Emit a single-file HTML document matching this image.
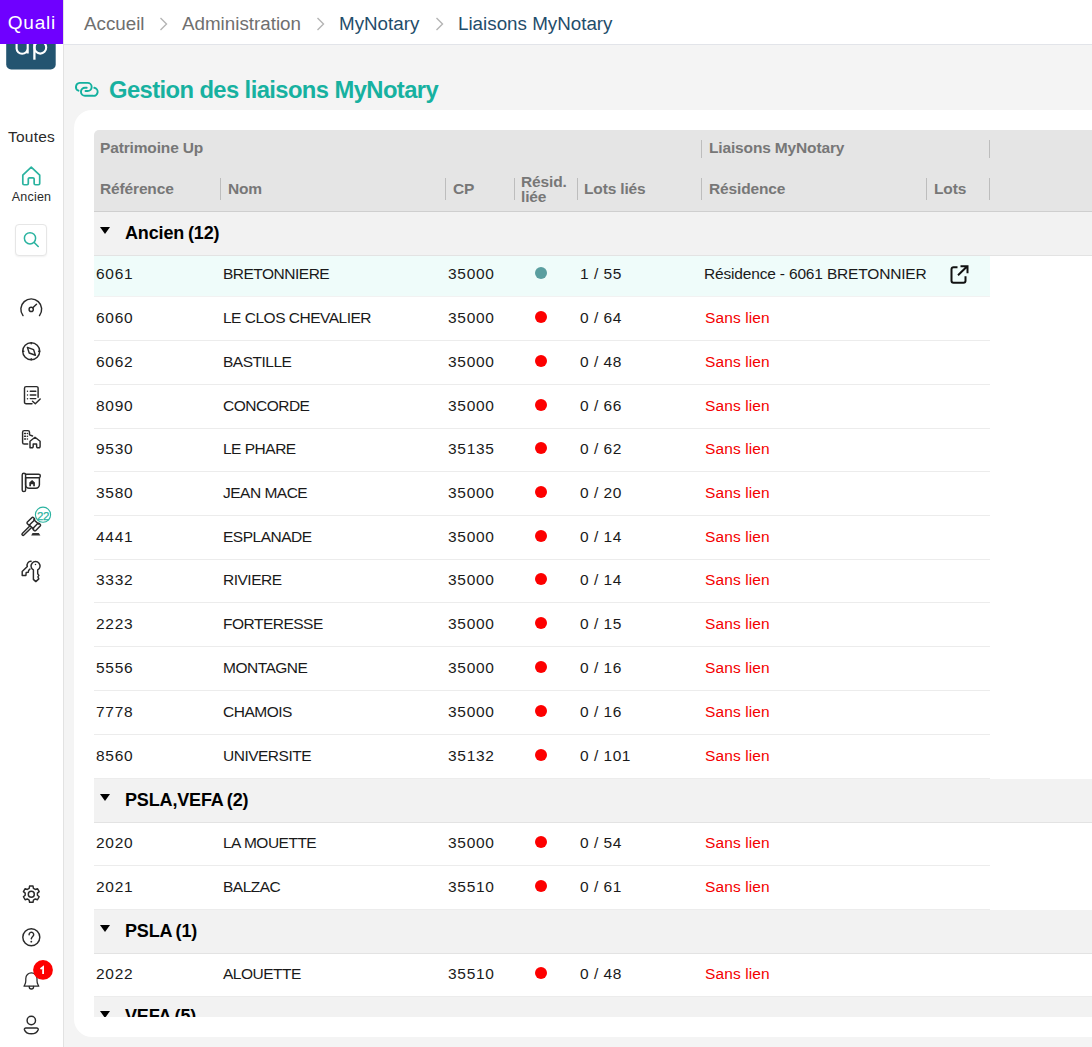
<!DOCTYPE html>
<html><head><meta charset="utf-8">
<style>
*{margin:0;padding:0;box-sizing:border-box}
html,body{width:1092px;height:1047px;overflow:hidden;background:#f4f4f4;font-family:"Liberation Sans",sans-serif;color:#1a1a1a}
#side{position:absolute;left:0;top:0;width:64px;height:1047px;background:#fff;border-right:1px solid #e2e2e2}
#sidesvg{position:absolute;left:0;top:0}
#top{position:absolute;left:64px;top:0;width:1028px;height:45px;background:#fff;border-bottom:1px solid #e2e4e9}
#quali{position:absolute;left:0;top:0;width:63px;height:44px;background:#6f00ff;color:#fff;font-size:19px;line-height:46px;text-align:center;letter-spacing:0.8px;text-indent:0.8px}
.crumb{position:absolute;top:13px;font-size:18.8px;line-height:22px;color:#6f6f6f;white-space:nowrap}
.crumb.dk{color:#1f4d6b}
#title{position:absolute;left:109px;top:77px;font-size:23.8px;letter-spacing:-0.6px;line-height:26px;font-weight:bold;color:#17b1a0;white-space:nowrap}
#card{position:absolute;left:74px;top:110px;width:1100px;height:927px;background:#fff;border-radius:18px}
#clip{position:absolute;left:94px;top:130px;width:1000px;height:887px;overflow:hidden}
#thead{position:absolute;left:0;top:0;width:1000px;height:82px;background:#e5e5e5;border-bottom:1px solid #cfcfcf;border-top-left-radius:5px}
.th{position:absolute;font-size:15.5px;line-height:18px;font-weight:bold;color:#777;letter-spacing:-0.15px;white-space:nowrap}
.sep{position:absolute;width:1px;background:#bdbdbd}
.grp{position:absolute;left:0;width:1000px;background:#f2f2f2;border-bottom:1px solid #e3e3e3}
.grp .tri{position:absolute;left:5.6px;top:15.3px;width:0;height:0;border-left:5.4px solid transparent;border-right:5.4px solid transparent;border-top:7px solid #000}
.grp .gt{position:absolute;left:31px;font-size:18px;word-spacing:-1px;letter-spacing:-0.15px;line-height:22px;font-weight:bold;color:#000;white-space:nowrap}
.row{position:absolute;left:0;width:896px;background:#fff;border-bottom:1px solid #ececec}
.row.sel{background:#effcfa;border-bottom-color:#f2f2f2}
.td{position:absolute;font-size:15.5px;line-height:20px;white-space:nowrap;color:#1a1a1a}
.td.n{letter-spacing:0.7px}
.dot{position:absolute;left:441px;width:12.4px;height:12.4px;border-radius:50%;background:#fd0000}
.dot.ok{background:#5a9e9f}
.red{color:#f40000}
.ext{position:absolute}
.slab{position:absolute;white-space:nowrap;color:#2a2a2a;text-align:center}
#search{position:absolute;left:15px;top:224px;width:32px;height:32px;border:1px solid #e6e6e6;border-radius:4px;box-shadow:0 1px 2px rgba(0,0,0,0.06);background:#fff}
</style></head><body>
<div id="side">
<svg id="sidesvg" width="64" height="1047" viewBox="0 0 64 1047">
  <!-- logo -->
  <rect x="6.2" y="19" width="49.5" height="50.5" rx="5" fill="#235470"/>
  <path d="M16.6 40V48.5A5.5 5.2 0 0 0 27.7 48.5V40M27.7 44V53.6" fill="none" stroke="#fff" stroke-width="2.1"/>
  <path d="M34.4 41V59.7" fill="none" stroke="#fff" stroke-width="2.3"/>
  <ellipse cx="40.3" cy="47.6" rx="5.9" ry="6" fill="none" stroke="#fff" stroke-width="2.1"/>
  <!-- home teal -->
  <path d="M22.8 175.2L31.25 167.2L39.7 175.2V183.5A1.25 1.25 0 0 1 38.45 184.75H35.4A1.25 1.25 0 0 1 34.15 183.5V179A1.2 1.2 0 0 0 32.95 177.8H29.5A1.2 1.2 0 0 0 28.3 179V183.5A1.25 1.25 0 0 1 27.05 184.75H24.05A1.25 1.25 0 0 1 22.8 183.5Z" fill="none" stroke="#2bb3a0" stroke-width="1.7" stroke-linejoin="round"/>
  <g fill="none" stroke="#2a2a2a" stroke-width="1.45" stroke-linecap="round" stroke-linejoin="round">
    <!-- gauge -->
    <path d="M23 315.6A10.4 10.4 0 1 1 39.5 315.6"/>
    <circle cx="31.2" cy="309.4" r="2.1"/>
    <path d="M32.8 307.8L36.5 304.2"/>
    <!-- compass -->
    <circle cx="31.2" cy="351.2" r="8.5"/>
    <path d="M27.4 347.4L33.6 349.6L35.4 355.2L29.2 353Z"/>
    <path d="M31.2 342.7V343.8M31.2 358.6V359.7M22.7 351.2H23.8M38.6 351.2H39.7"/>
    <!-- checklist -->
    <path d="M32 403.8H26.1A1.6 1.6 0 0 1 24.5 402.2V388.2A1.6 1.6 0 0 1 26.1 386.6H36.5A1.6 1.6 0 0 1 38.1 388.2V397.2"/>
    <path d="M30.3 391.3H35.8M30.3 394.9H35.8M30.3 398.6H35.8M27.5 391.3V391.35M27.5 394.9V394.95M27.5 398.6V398.65"/>
    <path d="M32.5 401.3L35.3 403.8L40.2 399"/>
    <!-- building house -->
    <path d="M27.7 444H24.2A1.6 1.6 0 0 1 22.6 442.4V432.2A1.6 1.6 0 0 1 24.2 430.6H27.9A1.6 1.6 0 0 1 29.5 432.2V434.8L32.5 436"/>
    <path d="M24.6 433.5H25.6M27.5 433.5V433.55M24.6 436.3H25.6M27.5 436.3V436.35M24.6 438.9H25.6M27.5 438.9V438.95"/>
    <path d="M30 447.8V441.2L35 437.2L40.1 441.2V446.6A1.2 1.2 0 0 1 38.9 447.8H37.8A1.2 1.2 0 0 1 36.6 446.6V443.9H33.2V446.6A1.2 1.2 0 0 1 32 447.8H31.2A1.2 1.2 0 0 1 30 446.6Z"/>
    <!-- sign -->
    <path d="M22.2 474.9A1.7 1.7 0 0 1 25.6 474.9V489.9A1.7 1.7 0 0 1 22.2 489.9Z"/>
    <path d="M25.6 474.2H38.6A1.75 1.75 0 0 1 38.6 477.7H25.6"/>
    <path d="M25.6 477.7V484.7A3.5 3.5 0 0 0 29.1 488.2H35.9A3.5 3.5 0 0 0 39.4 484.7V477.7"/>
    <!-- gavel -->
    <g transform="translate(-0.5,0.7)">
    <path d="M27.9 521.4L32.3 517A1.2 1.2 0 0 1 34 517L34.8 517.8A1.2 1.2 0 0 1 34.8 519.5L30.4 523.9A1.2 1.2 0 0 1 28.7 523.9L27.9 523.1A1.2 1.2 0 0 1 27.9 521.4Z"/>
    <path d="M33.8 527.3L38.2 522.9A1.2 1.2 0 0 1 39.9 522.9L40.7 523.7A1.2 1.2 0 0 1 40.7 525.4L36.3 529.8A1.2 1.2 0 0 1 34.6 529.8L33.8 529A1.2 1.2 0 0 1 33.8 527.3Z"/>
    <path d="M34.3 519L39.2 523.4M29.5 524.2L34.2 528.4"/>
    <path d="M29.8 525.8L22.8 532.8A1.1 1.1 0 0 0 24.4 534.4L31.6 527.4"/>
    </g>
    <!-- keys -->
    <path d="M33.4 570V579.4L35.8 581.6L38.8 578.9L37.9 576.8L38.9 575.4L37.7 573.8V570A4.5 4.5 0 1 0 33.4 570Z"/>
    <path d="M35.5 564.4V564.5"/>
    <path d="M31.1 561.3A3.8 3.8 0 0 0 27.3 566.4L22.2 571.6V575.4H25.9L26.2 572.5L28.2 572.3L28.6 570.6L30 569.1"/>
    <!-- gear -->
    <path d="M33.42 888.37 L33.03 886.08 L29.57 886.08 L29.18 888.37 L27.31 889.45 L25.13 888.65 L23.41 891.64 L25.19 893.12 L25.19 895.28 L23.41 896.76 L25.13 899.75 L27.31 898.95 L29.18 900.03 L29.57 902.32 L33.03 902.32 L33.42 900.03 L35.29 898.95 L37.47 899.75 L39.19 896.76 L37.41 895.28 L37.41 893.12 L39.19 891.64 L37.47 888.65 L35.29 889.45Z"/>
    <circle cx="31.3" cy="894.2" r="3"/>
    <!-- help -->
    <circle cx="31.3" cy="937.3" r="8.5"/>
    <path d="M29.1 934.8A2.3 2.3 0 1 1 32.9 936.3C32.2 937 31.6 937.6 31.3 938.7"/>
    <path d="M31.3 941.6V941.65" stroke-width="1.8"/>
    <!-- bell -->
    <path d="M24 986.2H38.8L37.8 984.2C37.2 983 37 982 37 980.6V978.4A5.6 5.6 0 0 0 25.8 978.4V980.6C25.8 982 25.6 983 25 984.2Z" stroke-width="1.25"/>
    <path d="M29.2 986.4A2.2 2.6 0 0 0 33.6 986.4" stroke-width="1.3"/>
    <!-- user -->
    <circle cx="31.3" cy="1020.5" r="4.2"/>
    <path d="M25.9 1027.9H36.7A1.6 1.6 0 0 1 38.2 1029.7C37.2 1032.3 34.6 1033.8 31.3 1033.8C28 1033.8 25.4 1032.3 24.4 1029.7A1.6 1.6 0 0 1 25.9 1027.9Z"/>
  </g>
  <path d="M29.3 486.2V482.6L32.1 480.1L34.9 482.6V486.2H33.2V484.3H31V486.2Z" fill="#2a2a2a"/>
  <!-- gavel base -->
  <path d="M32.5 533.1H38.8L40.4 535.6H31.2Z" fill="#333"/>
  <!-- badge 22 -->
  <circle cx="43" cy="514.7" r="7.6" fill="#fff" stroke="#2bb3a0" stroke-width="1.1"/>
  <text x="43" y="520.2" text-anchor="middle" style="font-family:'Liberation Sans',sans-serif;font-size:11.5px" fill="#2bb3a0" stroke="#2bb3a0" stroke-width="0.25" letter-spacing="-0.4">22</text>
  <!-- red badge -->
  <circle cx="43" cy="969.9" r="9.9" fill="#fd0000"/>
  <path d="M40.5 969L43.1 967.1V974" fill="none" stroke="#fff" stroke-width="1.8" stroke-linejoin="miter"/>
</svg>
<div id="search"></div>
<svg style="position:absolute;left:0;top:0" width="64" height="300" viewBox="0 0 64 300">
  <circle cx="30" cy="238.3" r="5.6" fill="none" stroke="#2bb3a0" stroke-width="1.5"/>
  <path d="M34.2 242.5L38.2 246.5" stroke="#2bb3a0" stroke-width="1.6" stroke-linecap="round"/>
</svg>
<div class="slab" style="left:0;width:63px;top:128px;font-size:15.5px;line-height:18px;letter-spacing:0.2px">Toutes</div>
<div class="slab" style="left:0;width:63px;top:190px;font-size:12.5px;line-height:15px;letter-spacing:0.2px">Ancien</div>
</div>
<div id="quali">Quali</div>
<div id="top"></div>
<div class="crumb" style="left:84px">Accueil</div>
<svg style="position:absolute;left:158px;top:16px" width="12" height="16" viewBox="0 0 12 16"><path d="M2.5 2L8.5 8L2.5 14" fill="none" stroke="#b4b4b4" stroke-width="1.4"/></svg>
<div class="crumb" style="left:182px">Administration</div>
<svg style="position:absolute;left:315px;top:16px" width="12" height="16" viewBox="0 0 12 16"><path d="M2.5 2L8.5 8L2.5 14" fill="none" stroke="#b4b4b4" stroke-width="1.4"/></svg>
<div class="crumb dk" style="left:339px">MyNotary</div>
<svg style="position:absolute;left:434px;top:16px" width="12" height="16" viewBox="0 0 12 16"><path d="M2.5 2L8.5 8L2.5 14" fill="none" stroke="#b4b4b4" stroke-width="1.4"/></svg>
<div class="crumb dk" style="left:458px">Liaisons MyNotary</div>
<svg style="position:absolute;left:70px;top:74px" width="32" height="30" viewBox="70 74 32 30">
  <g fill="none" stroke="#12b09e" stroke-width="1.9" stroke-linecap="round">
    <path d="M78.5 90.7A4.05 4.05 0 0 1 79.7 82.9H87.6A4.05 4.05 0 0 1 87.6 91H85.5"/>
    <path d="M86.7 87.7H85A4.05 4.05 0 0 0 85 95.8H92.9A4.05 4.05 0 0 0 94.3 87.8"/>
  </g>
</svg>
<div id="title">Gestion des liaisons MyNotary</div>
<div id="card"></div>
<div id="clip">
  <div id="thead">
    <div class="th" style="left:6px;top:9px">Patrimoine Up</div>
    <div class="th" style="left:615px;top:9px">Liaisons MyNotary</div>
    <div class="sep" style="left:607px;top:10px;height:18px"></div>
    <div class="sep" style="left:895px;top:10px;height:18px"></div>
    <div class="th" style="left:6px;top:50px">Référence</div>
    <div class="sep" style="left:126px;top:48px;height:22px"></div>
    <div class="th" style="left:134px;top:50px">Nom</div>
    <div class="sep" style="left:351px;top:48px;height:22px"></div>
    <div class="th" style="left:359px;top:50px">CP</div>
    <div class="sep" style="left:420px;top:48px;height:22px"></div>
    <div class="th" style="left:427px;top:43.5px;line-height:15px">Résid.<br>liée</div>
    <div class="sep" style="left:483px;top:48px;height:22px"></div>
    <div class="th" style="left:490px;top:50px">Lots liés</div>
    <div class="sep" style="left:607px;top:48px;height:22px"></div>
    <div class="th" style="left:615px;top:50px">Résidence</div>
    <div class="sep" style="left:832px;top:48px;height:22px"></div>
    <div class="th" style="left:840px;top:50px">Lots</div>
    <div class="sep" style="left:895px;top:48px;height:22px"></div>
  </div>
<div class="grp" style="top:82px;height:44px"><div class="tri" style="top:15.3px"></div><div class="gt" style="top:9.5px">Ancien (12)</div></div>
<div class="row sel" style="top:126px;height:41px"><div class="td n" style="left:2px;top:7.9px">6061</div><div class="td" style="left:129px;top:7.9px;letter-spacing:-0.5px">BRETONNIERE</div><div class="td n" style="left:354px;top:7.9px">35000</div><div class="dot ok" style="top:11.0px"></div><div class="td n" style="left:486px;top:7.9px;letter-spacing:0.5px">1 / 55</div><div class="td" style="left:610px;top:7.9px;letter-spacing:-0.17px">Résidence - 6061 BRETONNIER</div><svg class="ext" style="left:856px;top:9.1px" width="20" height="20" viewBox="0 0 20 20"><path d="M7.5 2.2H3.5a2 2 0 0 0-2 2V15.8a2 2 0 0 0 2 2H13.5a2 2 0 0 0 2-2V11.2M8 10.2L17 1.5M10.5 1.2H17.5V8.2" fill="none" stroke="#111" stroke-width="2" stroke-linecap="butt" stroke-linejoin="miter"/></svg></div>
<div class="row" style="top:167px;height:44px"><div class="td n" style="left:2px;top:10.9px">6060</div><div class="td" style="left:129px;top:10.9px;letter-spacing:-0.5px">LE CLOS CHEVALIER</div><div class="td n" style="left:354px;top:10.9px">35000</div><div class="dot" style="top:14.0px"></div><div class="td n" style="left:486px;top:10.9px;letter-spacing:0.5px">0 / 64</div><div class="td red" style="left:611px;top:10.9px;letter-spacing:0.1px">Sans lien</div></div>
<div class="row" style="top:211px;height:44px"><div class="td n" style="left:2px;top:10.9px">6062</div><div class="td" style="left:129px;top:10.9px;letter-spacing:-0.5px">BASTILLE</div><div class="td n" style="left:354px;top:10.9px">35000</div><div class="dot" style="top:14.0px"></div><div class="td n" style="left:486px;top:10.9px;letter-spacing:0.5px">0 / 48</div><div class="td red" style="left:611px;top:10.9px;letter-spacing:0.1px">Sans lien</div></div>
<div class="row" style="top:255px;height:44px"><div class="td n" style="left:2px;top:10.9px">8090</div><div class="td" style="left:129px;top:10.9px;letter-spacing:-0.5px">CONCORDE</div><div class="td n" style="left:354px;top:10.9px">35000</div><div class="dot" style="top:14.0px"></div><div class="td n" style="left:486px;top:10.9px;letter-spacing:0.5px">0 / 66</div><div class="td red" style="left:611px;top:10.9px;letter-spacing:0.1px">Sans lien</div></div>
<div class="row" style="top:299px;height:43px"><div class="td n" style="left:2px;top:9.9px">9530</div><div class="td" style="left:129px;top:9.9px;letter-spacing:-0.5px">LE PHARE</div><div class="td n" style="left:354px;top:9.9px">35135</div><div class="dot" style="top:13.0px"></div><div class="td n" style="left:486px;top:9.9px;letter-spacing:0.5px">0 / 62</div><div class="td red" style="left:611px;top:9.9px;letter-spacing:0.1px">Sans lien</div></div>
<div class="row" style="top:342px;height:44px"><div class="td n" style="left:2px;top:10.9px">3580</div><div class="td" style="left:129px;top:10.9px;letter-spacing:-0.5px">JEAN MACE</div><div class="td n" style="left:354px;top:10.9px">35000</div><div class="dot" style="top:14.0px"></div><div class="td n" style="left:486px;top:10.9px;letter-spacing:0.5px">0 / 20</div><div class="td red" style="left:611px;top:10.9px;letter-spacing:0.1px">Sans lien</div></div>
<div class="row" style="top:386px;height:44px"><div class="td n" style="left:2px;top:10.9px">4441</div><div class="td" style="left:129px;top:10.9px;letter-spacing:-0.5px">ESPLANADE</div><div class="td n" style="left:354px;top:10.9px">35000</div><div class="dot" style="top:14.0px"></div><div class="td n" style="left:486px;top:10.9px;letter-spacing:0.5px">0 / 14</div><div class="td red" style="left:611px;top:10.9px;letter-spacing:0.1px">Sans lien</div></div>
<div class="row" style="top:430px;height:43px"><div class="td n" style="left:2px;top:9.9px">3332</div><div class="td" style="left:129px;top:9.9px;letter-spacing:-0.5px">RIVIERE</div><div class="td n" style="left:354px;top:9.9px">35000</div><div class="dot" style="top:13.0px"></div><div class="td n" style="left:486px;top:9.9px;letter-spacing:0.5px">0 / 14</div><div class="td red" style="left:611px;top:9.9px;letter-spacing:0.1px">Sans lien</div></div>
<div class="row" style="top:473px;height:44px"><div class="td n" style="left:2px;top:10.9px">2223</div><div class="td" style="left:129px;top:10.9px;letter-spacing:-0.5px">FORTERESSE</div><div class="td n" style="left:354px;top:10.9px">35000</div><div class="dot" style="top:14.0px"></div><div class="td n" style="left:486px;top:10.9px;letter-spacing:0.5px">0 / 15</div><div class="td red" style="left:611px;top:10.9px;letter-spacing:0.1px">Sans lien</div></div>
<div class="row" style="top:517px;height:44px"><div class="td n" style="left:2px;top:10.9px">5556</div><div class="td" style="left:129px;top:10.9px;letter-spacing:-0.5px">MONTAGNE</div><div class="td n" style="left:354px;top:10.9px">35000</div><div class="dot" style="top:14.0px"></div><div class="td n" style="left:486px;top:10.9px;letter-spacing:0.5px">0 / 16</div><div class="td red" style="left:611px;top:10.9px;letter-spacing:0.1px">Sans lien</div></div>
<div class="row" style="top:561px;height:44px"><div class="td n" style="left:2px;top:10.9px">7778</div><div class="td" style="left:129px;top:10.9px;letter-spacing:-0.5px">CHAMOIS</div><div class="td n" style="left:354px;top:10.9px">35000</div><div class="dot" style="top:14.0px"></div><div class="td n" style="left:486px;top:10.9px;letter-spacing:0.5px">0 / 16</div><div class="td red" style="left:611px;top:10.9px;letter-spacing:0.1px">Sans lien</div></div>
<div class="row" style="top:605px;height:44px"><div class="td n" style="left:2px;top:10.9px">8560</div><div class="td" style="left:129px;top:10.9px;letter-spacing:-0.5px">UNIVERSITE</div><div class="td n" style="left:354px;top:10.9px">35132</div><div class="dot" style="top:14.0px"></div><div class="td n" style="left:486px;top:10.9px;letter-spacing:0.5px">0 / 101</div><div class="td red" style="left:611px;top:10.9px;letter-spacing:0.1px">Sans lien</div></div>
<div class="grp" style="top:649px;height:44px"><div class="tri" style="top:15.3px"></div><div class="gt" style="top:9.5px">PSLA,VEFA (2)</div></div>
<div class="row" style="top:693px;height:43px"><div class="td n" style="left:2px;top:9.9px">2020</div><div class="td" style="left:129px;top:9.9px;letter-spacing:-0.5px">LA MOUETTE</div><div class="td n" style="left:354px;top:9.9px">35000</div><div class="dot" style="top:13.0px"></div><div class="td n" style="left:486px;top:9.9px;letter-spacing:0.5px">0 / 54</div><div class="td red" style="left:611px;top:9.9px;letter-spacing:0.1px">Sans lien</div></div>
<div class="row" style="top:736px;height:44px"><div class="td n" style="left:2px;top:10.9px">2021</div><div class="td" style="left:129px;top:10.9px;letter-spacing:-0.5px">BALZAC</div><div class="td n" style="left:354px;top:10.9px">35510</div><div class="dot" style="top:14.0px"></div><div class="td n" style="left:486px;top:10.9px;letter-spacing:0.5px">0 / 61</div><div class="td red" style="left:611px;top:10.9px;letter-spacing:0.1px">Sans lien</div></div>
<div class="grp" style="top:780px;height:44px"><div class="tri" style="top:15.3px"></div><div class="gt" style="top:9.5px">PSLA (1)</div></div>
<div class="row" style="top:824px;height:43px;width:1000px"><div class="td n" style="left:2px;top:9.9px">2022</div><div class="td" style="left:129px;top:9.9px;letter-spacing:-0.5px">ALOUETTE</div><div class="td n" style="left:354px;top:9.9px">35510</div><div class="dot" style="top:13.0px"></div><div class="td n" style="left:486px;top:9.9px;letter-spacing:0.5px">0 / 48</div><div class="td red" style="left:611px;top:9.9px;letter-spacing:0.1px">Sans lien</div></div>
<div class="grp" style="top:867px;height:44px"><div class="tri" style="top:13.8px"></div><div class="gt" style="top:8.0px">VEFA (5)</div></div>
</div>
</body></html>
